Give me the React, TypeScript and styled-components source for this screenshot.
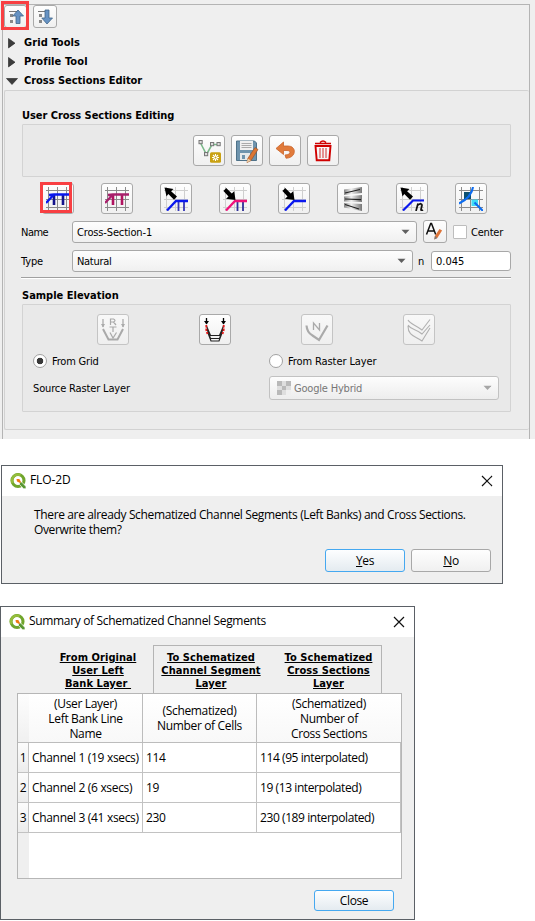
import React from "react";
import styled, { createGlobalStyle, css } from "styled-components";

const GlobalStyle = createGlobalStyle`
  *, *::after { box-sizing: border-box; }
  body { margin: 0; background: #fff; color: #000; }
`;

const panelFont = css`font-family: "DejaVu Sans Condensed", "DejaVu Sans", sans-serif; font-stretch: condensed;`;
const dialogFont = css`font-family: "Open Sans", "Noto Sans", sans-serif;`;

const Page = styled.main`
  width: 535px;
  height: 921px;
  display: flex;
  flex-direction: column;
  align-items: flex-start;
  overflow: hidden;
`;

/* ---------- tool panel ---------- */

const Dock = styled.section`
  width: 535px;
  height: 439px;
  padding: 4px 5px 0 2px;
  background: #efefef;
  ${panelFont}
  font-size: 11px;
`;

const DockBody = styled.div`
  height: 435px;
  border: solid #b4b4b4;
  border-width: 1px 1px 0 1px;
  padding-left: 1px;
`;

const Toolbar = styled.div`
  display: flex;
  height: 28px;
  gap: 6px;
`;

const Label = styled.span<{ $w?: number; $ls?: number; $dim?: boolean; $pl?: number }>`
  display: block;
  flex: none;
  width: ${p => (p.$w ? p.$w + "px" : "auto")};
  padding: 2px 0 0 ${p => p.$pl ?? 0}px;
  letter-spacing: ${p => p.$ls ?? -0.15}px;
  color: ${p => (p.$dim ? "#777" : "#000")};
  white-space: pre;
  line-height: 14px;
`;

const Heading = styled.h2<{ $ls?: number }>`
  margin: 0;
  font-size: 11px;
  font-weight: 700;
  line-height: 14px;
  letter-spacing: ${p => p.$ls ?? 0}px;
  white-space: pre;
`;

const TreeRow = styled.div`
  display: flex;
  align-items: center;
  height: 19px;
  padding-left: 2px;
  gap: 6px;
  svg { flex: none; }
`;

const Editor = styled.div`
  height: 340px;
  border: 1px solid #d2d2d2;
  border-right: 0;
  border-radius: 2px;
  background: #ececec;
  padding: 18px 18px 0 17px;
`;

const Group = styled.div<{ $h: number }>`
  height: ${p => p.$h}px;
  margin-top: 1px;
  border: 1px solid #d3d3d3;
  border-radius: 1px;
  background: #e9e9e9;
`;

const ButtonRow = styled.div<{ $gap: number; $pad: number }>`
  display: flex;
  gap: ${p => p.$gap}px;
  padding-left: ${p => p.$pad}px;
`;

const ToolButton = styled.button<{ $w?: number; $h?: number; $off?: boolean }>`
  flex: none;
  width: ${p => p.$w ?? 32}px;
  height: ${p => p.$h ?? 31}px;
  padding: 0;
  display: grid;
  place-items: center;
  border: 1px solid ${p => (p.$off ? "#c4c4c4" : "#a9a9a9")};
  border-radius: 3px;
  background: ${p => (p.$off ? "linear-gradient(#f8f8f8, #efefef)" : "linear-gradient(#fefefe, #f0f0f0)")};
  svg { display: block; }
`;

/* Red highlight drawn over the button it marks. */
const Marked = styled.div<{ $l: number; $t: number; $w: number; $h: number }>`
  position: relative;
  flex: none;
  &::after {
    content: "";
    position: absolute;
    left: ${p => p.$l}px;
    top: ${p => p.$t}px;
    width: ${p => p.$w}px;
    height: ${p => p.$h}px;
    border: 3px solid #f83f42;
  }
`;

const Field = styled.div<{ $h: number; $mt: number }>`
  display: flex;
  align-items: center;
  height: ${p => p.$h}px;
  margin-top: ${p => p.$mt}px;
`;

const FormRow = styled(Field)`
  margin-left: -1px;
  margin-right: -4px;
`;

const Combo = styled.div<{ $w: number; $h: number; $off?: boolean }>`
  flex: none;
  display: flex;
  align-items: center;
  width: ${p => p.$w}px;
  height: ${p => p.$h}px;
  padding: 0 6px 0 ${p => (p.$off ? 7 : 4)}px;
  border: 1px solid ${p => (p.$off ? "#c2c2c2" : "#a8a8a8")};
  border-radius: 3px;
  background: linear-gradient(#fdfdfd, ${p => (p.$off ? "#ededed" : "#f0f0f0")});
  & > svg:last-child { margin-left: auto; }
`;

const Input = styled.input`
  width: 80px;
  height: 20px;
  padding: 1px 4px 0;
  border: 1px solid #a8a8a8;
  border-radius: 3px;
  background: #fff;
  ${panelFont}
  font-size: 11px;
  outline: none;
`;

const Check = styled.span`
  width: 14px;
  height: 14px;
  margin: 0 4px 0 6px;
  border: 1px solid #bdbdbd;
  border-radius: 1px;
  background: #fff;
`;

const Radio = styled.span<{ $on?: boolean }>`
  flex: none;
  width: 14px;
  height: 14px;
  margin-right: 5px;
  border: 1px solid #a2a2a2;
  border-radius: 50%;
  background: ${p => (p.$on ? "radial-gradient(circle, #3a3a3a 0 3px, #fff 3.6px)" : "#fff")};
`;

const Separator = styled.div`
  height: 2px;
  margin: 5px 0 0 -1px;
  border-top: 1px solid #a0a0a0;
  border-bottom: 1px solid #fff;
`;

const OptionRow = styled.div<{ $mt: number; $h: number }>`
  display: grid;
  grid-template-columns: 236px 230px;
  align-items: center;
  height: ${p => p.$h}px;
  margin: ${p => p.$mt}px 0 0 10px;
  & > div { display: flex; align-items: center; }
`;

/* ---------- dialogs ---------- */

const Dialog = styled.section<{ $w: number; $h: number; $ml: number; $mt: number }>`
  width: ${p => p.$w}px;
  height: ${p => p.$h}px;
  margin: ${p => p.$mt}px 0 0 ${p => p.$ml}px;
  border: 1px solid #5b6066;
  background: #efefef;
  ${dialogFont}
  font-size: 12px;
  flex: none;
`;

const TitleBar = styled.header`
  display: flex;
  align-items: center;
  height: 30px;
  padding: 0 9px 0 8px;
  background: #fff;
  svg { flex: none; }
  & > svg:last-child { margin-left: auto; }
`;

const Message = styled.p`
  margin: 11px 0 0 32px;
  line-height: 15px;
  white-space: pre;
`;

const Line = styled.span<{ $ls: number }>`
  display: block;
  letter-spacing: ${p => p.$ls}px;
`;

const TitleText = styled(Line)`
  margin: 0 0 2px 3px;
  line-height: 16px;
`;

const DialogButtons = styled.div<{ $mt: number; $mr: number }>`
  display: flex;
  justify-content: flex-end;
  gap: 6px;
  margin: ${p => p.$mt}px ${p => p.$mr}px 0 0;
`;

const PushButton = styled.button<{ $focus?: boolean; $h: number }>`
  width: 80px;
  height: ${p => p.$h}px;
  padding: 0;
  border: 1px solid ${p => (p.$focus ? "#45a8f0" : "#a8a8a8")};
  border-radius: 3px;
  background: ${p => (p.$focus ? "linear-gradient(#fdfeff, #e4ebf0)" : "linear-gradient(#fefefe, #f0f0f0)")};
  ${dialogFont}
  font-size: 12px;
  letter-spacing: -0.4px;
  color: #000;
`;

const Banner = styled.div`
  display: grid;
  grid-template-columns: 106px 229px;
  justify-content: start;
  height: 56px;
  padding: 8px 0 0 46px;
`;

const BannerGroup = styled.div<{ $box?: boolean }>`
  display: grid;
  grid-template-columns: ${p => (p.$box ? "114px 121px" : "102px")};
  padding: ${p => (p.$box ? "5px 0 0 0" : "6px 0 0 0")};
  border: ${p => (p.$box ? "solid #b4b4b4" : "0")};
  border-width: ${p => (p.$box ? "1px 1px 0 1px" : "0")};
`;

const BannerText = styled.div`
  ${panelFont}
  font-size: 11px;
  font-weight: 700;
  line-height: 13px;
  text-align: center;
  white-space: pre;
  text-decoration: underline;
  letter-spacing: 0.06px;
`;

const TableFrame = styled.div`
  width: 385px;
  height: 186px;
  margin-left: 16px;
  border: 1px solid #b6b6b6;
  background: linear-gradient(90deg, #efefef 11px, #fff 11px);
`;

const Table = styled.div`
  display: grid;
  grid-template-columns: 11px 114px 114px 144px;
  grid-template-rows: 49px 30px 30px 30px;
`;

const HeadCell = styled.div`
  display: flex;
  align-items: center;
  justify-content: center;
  text-align: center;
  white-space: pre;
  line-height: 15px;
  letter-spacing: -0.34px;
  border: solid #bcbcbc;
  border-width: 0 1px 1px 0;
  background: linear-gradient(#fff, #f8f8f8);
  &:first-child { border-right: 0; background: linear-gradient(#fdfdfd, #f0f0f0); }
  &:nth-child(4) { border-right: 0; }
`;

const Cell = styled.div<{ $index?: boolean; $ls?: number }>`
  display: flex;
  align-items: center;
  justify-content: ${p => (p.$index ? "center" : "flex-start")};
  padding-left: ${p => (p.$index ? 0 : 3)}px;
  white-space: pre;
  letter-spacing: ${p => p.$ls ?? -0.42}px;
  border: solid #c2c2c2;
  border-width: 0 1px 1px 0;
  background: ${p => (p.$index ? "linear-gradient(#fcfcfc, #ececec)" : "#fff")};
`;

/* ---------- icons ---------- */

const Chevron = ({ off }: { off?: boolean }) => (
  <svg width="9" height="6" viewBox="0 0 9 6"><path d="M.5.7h8L4.5 5z" fill={off ? "#a6a6a6" : "#606060"} /></svg>
);

const TreeArrow = ({ open }: { open?: boolean }) => (
  <svg width="12" height="12" viewBox="0 0 12 12">
    <path d={open ? "M.5 3.500h11L6 9.500z" : "M2.500 1.500v9.400L9 6.200z"} fill="#3c3c3c" stroke="#222" strokeWidth=".6" />
  </svg>
);

const ListArrow = ({ down }: { down?: boolean }) => (
  <svg width="18" height="18" viewBox="0 0 18 18">
    <path d="M2 3.5h9" stroke="#777" />
    <path d="M3 6h3v3H3zM3 12h3v3H3z" fill="#888" />
    <path d={down ? "M9 2h4v8h3.5L11 16 5.8 10H9z" : "M9 15.5h4V8h3.5L11 2 5.8 8H9z"} fill="#6692c3" stroke="#3f6488" strokeWidth=".8" />
  </svg>
);

const Grid = ({ light }: { light?: boolean }) => (
  <path d="M2.500 0v24M11.500 0v24M20.500 0v24M0 3.500h24M0 12.500h24M0 20.500h24" stroke={light ? "#cfcfcf" : "#8b8b8b"} fill="none" />
);

const Icon = ({ children }: { children: React.ReactNode }) => (
  <svg width="24" height="24" viewBox="0 0 24 24" fill="none">{children}</svg>
);

const Schematize = ({ main, side }: { main: string; side: string }) => (
  <Icon><Grid />
    <path d="M8 8v10M17 8v10" stroke={side} strokeWidth="2.6" />
    <path d="M0 16l8-8.500M3 8l5-.5h16" stroke={main} strokeWidth="2.3" />
  </Icon>
);

const ArrowOut = <path d="M.5.5l9 1.5-2.4 2.2L13 9.5l-3 3.2-5.7-5.6L2.5 9.5z" fill="#000" />;
const ArrowIn = <path d="M12.5 13L3 11.7l2.5-2.2L.5 4 3.2 1l5.6 5.5 2.4-2.200z" fill="#000" />;

const LayerEdit = ({ out, color, bars }: { out?: boolean; color: string; bars?: string }) => (
  <Icon><Grid light />
    {bars && <path d="M14.5 15v9M20 15v9" stroke={bars} strokeWidth="1.8" />}
    <path d="M3 23.5l9-9.5h12" stroke={color} strokeWidth="2.3" />
    {out ? ArrowOut : ArrowIn}
  </Icon>
);

const Wedges = () => (
  <Icon>
    <defs><linearGradient id="wedge"><stop stopColor="#858585" /><stop offset=".4" stopColor="#f1f1f1" /><stop offset="1" stopColor="#777" /></linearGradient></defs>
    <path d="M3 2.500L21 0v6L3 8zM3 9.500L21 8v7L3 14.500zM3 16l18 1v7L3 20.500z" fill="url(#wedge)" />
    <path d="M4 6l15-3.500M4 12l16 .6M4 17.500l14 4.500" stroke="#222" strokeWidth="1.2" />
  </Icon>
);

const Manning = () => (
  <Icon><Grid light />
    <path d="M3 23.5l10-10h11" stroke="#0a18ee" strokeWidth="2.2" />
    {ArrowOut}
    <path d="M16 24l2-7.5M17 19c2-2.600 5-3 5-.6l-1 4.200c0 1 1 1 2 .3" stroke="#111" strokeWidth="1.7" />
  </Icon>
);

const Confluence = () => (
  <Icon><Grid />
    <path d="M5 5h7v7H5z" fill="#0b4f70" /><path d="M12.5 12.5H19V19h-6.5z" fill="#3fdcf5" />
    <path d="M0 16.5C7 13 13 7 14 0M15.5 15.5L24 24" stroke="#0c6cf0" strokeWidth="2.1" />
  </Icon>
);

const AddLine = () => (
  <Icon>
    <path d="M3 3l6.5 12.5L15 5.5h8" stroke="#7bb98a" strokeWidth="1.6" />
    {[[2, 1.5], [7.5, 13.5], [13.5, 3.5], [20, 3.5]].map(([x, y]) => <rect key={x} x={x} y={y} width="3.2" height="3.2" fill="#ddd" stroke="#777" />)}
    <rect x="13" y="13.2" width="11" height="10.6" rx="1.5" fill="#c9a112" />
    <path d="M18.5 15v7M15 18.5h7M16 16l5 5M21 16l-5 5" stroke="#fff" strokeWidth="1.1" /><circle cx="18.5" cy="18.5" r="1" fill="#c9a112" />
  </Icon>
);

const Save = () => (
  <Icon>
    <path d="M1.5 2h18L21.5 4v17.5h-20z" fill="#6f94ad" stroke="#4f7289" />
    <path d="M5 2h13v9H5z" fill="#f0f0f0" /><path d="M6.5 4.5h10M6.5 6.5h10M6.5 8.5h10" stroke="#aaa" />
    <path d="M5 14h10v7H5z" fill="#e6e9ea" /><path d="M7 16h3v4H7z" fill="#6f94ad" />
    <path d="M20 8.5l3 2-7 11-4 2 .8-4z" fill="#dc7531" stroke="#9b552b" strokeWidth=".7" /><path d="M12.8 19.5l3 2-4 2z" fill="#e8cfaa" />
  </Icon>
);

const Undo = () => (
  <Icon>
    <path d="M3 9.5L10.5 3v4H15c9 0 8.5 12-2 12.200l-1-3.200c6 0 6.500-4.500 2-4.500h-3.500v4z" fill="#e17b3b" stroke="#c9632b" strokeWidth=".8" />
  </Icon>
);

const Trash = () => (
  <Icon>
    <path d="M4 4.5h16M9 3.500q3-3 6 0" stroke="#d00000" strokeWidth="1.5" />
    <path d="M4.5 7h15l-1.200 14.200H5.700z" stroke="#d00000" strokeWidth="1.9" />
    <path d="M9 9v10M12 9v10M15 9v10" stroke="#d66" strokeWidth="1.4" />
  </Icon>
);

const Rename = () => (
  <svg width="20" height="19" viewBox="0 0 20 19" fill="none">
    <path d="M1.5 12.5L5.7 1.5h.8l4.2 11M3 9h6.2" stroke="#111" strokeWidth="1.5" />
    <path d="M14.5 7l2.600 1.500-4.800 7.500-3 1.500.6-3.500z" fill="#dd7338" /><path d="M9.900 14l2.400 2-3 1.500z" fill="#777" />
  </svg>
);

const RtvIcon = () => (
  <Icon>
    <path d="M2 1v8M22 1v8" stroke="#a5a5a5" strokeWidth="1.2" /><path d="M0 6h4L2 9.500zM20 6h4l-2 3.500z" fill="#aaa" />
    <path d="M2 11l5.500 10.500h9L22 11" stroke="#a9a9a9" strokeWidth="2" />
    <path d="M9.500 7V1h3q3 1.500 0 3h-3m3 0l2.500 3M8.500 9h7M12 9v5M9 14.500l3 5.500 3.500-5.500" stroke="#a9a9a9" strokeWidth="1.2" />
  </Icon>
);

const ChannelIcon = () => (
  <Icon>
    <path d="M3.5 0v6M20.5 0v6" stroke="#000" strokeWidth="1.3" /><path d="M1 3h5L3.500 6.500zM18 3h5l-2.500 3.500z" fill="#000" />
    <path d="M3.500 8l4 9.500h9l4-9.500M4 11l3.500 9.500h9L20 11M5 15l3 8h8l3-8" stroke="#222" strokeWidth="1.200" />
    <path d="M3.300 7v5l1.200 4M20.700 7v5l-1.200 4" stroke="#e31515" strokeWidth="1.800" strokeDasharray="2.500 1" />
  </Icon>
);

const NProfile = () => (
  <Icon>
    <path d="M1.500 7.500q.5 7 6 10l6.500 4.500L22.500 7.500" stroke="#aaa" strokeWidth="2.200" />
    <path d="M8.500 12V5l6 7V5" stroke="#aaa" strokeWidth="1.300" />
  </Icon>
);

const Profiles = () => (
  <Icon>
    <path d="M1 2c2 4 8 5 14 10L23 1.500M1 7c3 5 9 4 14 9l8-9M1 8c0 10 7 10 14 15l8-13" stroke="#b0b0b0" strokeWidth="1.100" />
  </Icon>
);

const Raster = () => (
  <svg width="14" height="14" viewBox="0 0 14 14">
    <path d="M0 0h5v5H0zM9 0h5v5H9zM5 5h4v4H5zM0 9h5v5H0z" fill="#b9b9b9" /><path d="M5 0h4v5H5zM0 5h5v4H0zM9 5h5v4H9zM5 9h4v5H5z" fill="#dedede" />
    <path d="M9 9h5v5H9z" fill="#efefef" />
  </svg>
);

const Logo = () => (
  <svg width="17" height="17" viewBox="0 0 17 17" fill="none">
    <circle cx="8" cy="7.500" r="6" stroke="#70a52c" strokeWidth="3.100" />
    <path d="M2.600 10A6 6 0 0 1 10.500 2.100" stroke="#95bd3c" strokeWidth="2.400" />
    <path d="M9.500 9h2.200l4.300 4.500v2.300h-2.500L9.500 11.500z" fill="#589632" stroke="#fff" strokeWidth=".7" />
    <path d="M6.500 6h2.800l1.700 3-.8.900-3.200-1.300z" fill="#ee7913" />
  </svg>
);

const Close = () => (
  <svg width="12" height="12" viewBox="0 0 12 12"><path d="M1 1l10 10M11 1L1 11" stroke="#111" strokeWidth="1.2" /></svg>
);

const rows = [
  ["1", "Channel 1 (19 xsecs)", "114", "114 (95 interpolated)"],
  ["2", "Channel 2 (6 xsecs)", "19", "19 (13 interpolated)"],
  ["3", "Channel 3 (41 xsecs)", "230", "230 (189 interpolated)"],
];

export default function App() {
  return (
    <Page>
      <GlobalStyle />
      <Dock>
        <DockBody>
          <Toolbar>
            <Marked $l={-3} $t={-4} $w={28} $h={29}><ToolButton $w={23} $h={23}><ListArrow /></ToolButton></Marked>
            <ToolButton $w={24} $h={23}><ListArrow down /></ToolButton>
          </Toolbar>
          <TreeRow><TreeArrow /><Heading $ls={0.1}>Grid Tools</Heading></TreeRow>
          <TreeRow><TreeArrow /><Heading $ls={0.1}>Profile Tool</Heading></TreeRow>
          <TreeRow><TreeArrow open /><Heading $ls={-0.03}>Cross Sections Editor</Heading></TreeRow>
          <Editor>
            <Heading $ls={-0.05}>User Cross Sections Editing</Heading>
            <Group $h={53}>
              <Field $h={51} $mt={0}>
                <ButtonRow $gap={6} $pad={170}>
                  <ToolButton><AddLine /></ToolButton>
                  <ToolButton><Save /></ToolButton>
                  <ToolButton><Undo /></ToolButton>
                  <ToolButton><Trash /></ToolButton>
                </ButtonRow>
              </Field>
            </Group>
            <Field $h={31} $mt={6}>
              <ButtonRow $gap={27} $pad={20}>
                <Marked $l={-2} $t={-1} $w={32} $h={31}><ToolButton><Schematize main="#0a18ee" side="#14148c" /></ToolButton></Marked>
                <ToolButton><Schematize main="#a8206c" side="#b01460" /></ToolButton>
                <ToolButton><LayerEdit out color="#0a18ee" bars="#3838b8" /></ToolButton>
                <ToolButton><LayerEdit color="#f0117a" bars="#30309a" /></ToolButton>
                <ToolButton><LayerEdit color="#0a18ee" /></ToolButton>
                <ToolButton><Wedges /></ToolButton>
                <ToolButton><Manning /></ToolButton>
                <ToolButton><Confluence /></ToolButton>
              </ButtonRow>
            </Field>
            <FormRow $h={23} $mt={6}>
              <Label $w={51} $ls={-0.5}>Name</Label>
              <Combo $w={345} $h={22}><Label>Cross-Section-1</Label><Chevron /></Combo>
              <Label $w={6}> </Label>
              <ToolButton $w={24} $h={23}><Rename /></ToolButton>
              <Check /><Label $ls={-0.2}>Center</Label>
            </FormRow>
            <FormRow $h={22} $mt={7}>
              <Label $w={51}>Type</Label>
              <Combo $w={341} $h={22}><Label $ls={-0.3}>Natural</Label><Chevron /></Combo>
              <Label $w={18} $pl={5}>n</Label>
              <Input defaultValue="0.045" />
            </FormRow>
            <Separator />
            <Field $h={14} $mt={10}><Heading>Sample Elevation</Heading></Field>
            <Group $h={108}>
              <Field $h={31} $mt={9}>
                <ButtonRow $gap={70} $pad={74}>
                  <ToolButton $off><RtvIcon /></ToolButton>
                  <ToolButton><ChannelIcon /></ToolButton>
                  <ToolButton $off><NProfile /></ToolButton>
                  <ToolButton $off><Profiles /></ToolButton>
                </ButtonRow>
              </Field>
              <OptionRow $mt={8} $h={14}>
                <div><Radio $on /><Label $ls={-0.2}>From Grid</Label></div>
                <div><Radio /><Label $ls={-0.1}>From Raster Layer</Label></div>
              </OptionRow>
              <OptionRow $mt={9} $h={24}>
                <Label>Source Raster Layer</Label>
                <Combo $w={230} $h={24} $off><Raster /><Label $dim $ls={-0.2} $pl={3}>Google Hybrid</Label><Chevron off /></Combo>
              </OptionRow>
            </Group>
          </Editor>
        </DockBody>
      </Dock>

      <Dialog $w={502} $h={119} $ml={1} $mt={26}>
        <TitleBar><Logo /><TitleText $ls={-0.1}>FLO-2D</TitleText><Close /></TitleBar>
        <Message>
          <Line $ls={-0.36}>There are already Schematized Channel Segments (Left Banks) and Cross Sections.</Line>
          <Line $ls={-0.36}>Overwrite them?</Line>
        </Message>
        <DialogButtons $mt={12} $mr={11}>
          <PushButton $focus $h={23}><u>Y</u>es</PushButton>
          <PushButton $h={23}><u>N</u>o</PushButton>
        </DialogButtons>
      </Dialog>

      <Dialog $w={415} $h={314} $ml={0} $mt={22}>
        <TitleBar><Logo /><TitleText $ls={-0.33}>Summary of Schematized Channel Segments</TitleText><Close /></TitleBar>
        <Banner>
          <BannerGroup><BannerText>{"From Original\nUser Left\nBank Layer "}</BannerText></BannerGroup>
          <BannerGroup $box>
            <BannerText>{"To Schematized\nChannel Segment\nLayer"}</BannerText>
            <BannerText>{"To Schematized\nCross Sections\nLayer"}</BannerText>
          </BannerGroup>
        </Banner>
        <TableFrame>
          <Table>
            <HeadCell />
            <HeadCell>{"(User Layer)\nLeft Bank Line\nName"}</HeadCell>
            <HeadCell>{"(Schematized)\nNumber of Cells"}</HeadCell>
            <HeadCell>{"(Schematized)\nNumber of\nCross Sections"}</HeadCell>
            {rows.map(r => (
              <React.Fragment key={r[0]}>
                <Cell $index>{r[0]}</Cell>
                <Cell $ls={-0.33}>{r[1]}</Cell>
                <Cell>{r[2]}</Cell>
                <Cell>{r[3]}</Cell>
              </React.Fragment>
            ))}
          </Table>
        </TableFrame>
        <DialogButtons $mt={11} $mr={20}><PushButton $focus $h={21}>Close</PushButton></DialogButtons>
      </Dialog>
    </Page>
  );
}
